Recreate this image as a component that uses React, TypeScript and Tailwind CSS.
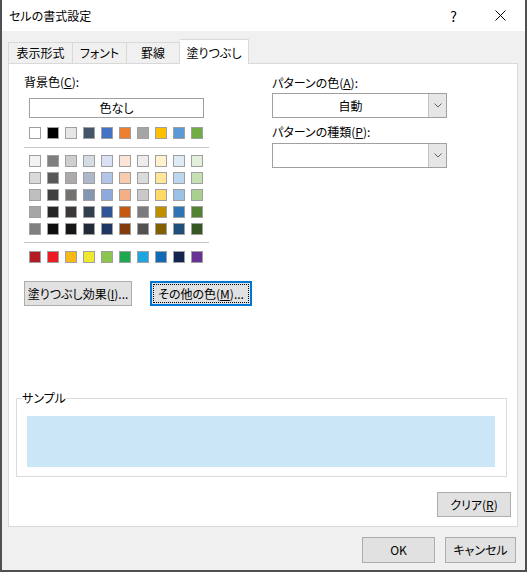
import React from "react";

const themeRow = [
  "#ffffff", "#000000", "#e7e6e6", "#44546a", "#4472c4",
  "#ed7d31", "#a5a5a5", "#ffc000", "#5b9bd5", "#70ad47",
];

const shadeRows = [
  ["#f2f2f2", "#7f7f7f", "#d0cece", "#d6dce4", "#d9e1f2", "#fce4d6", "#ededed", "#fff2cc", "#ddebf7", "#e2efda"],
  ["#d9d9d9", "#595959", "#aeaaaa", "#adb9ca", "#b4c6e7", "#f8cbad", "#dbdbdb", "#ffe699", "#bdd7ee", "#c6e0b4"],
  ["#bfbfbf", "#404040", "#767171", "#8496b0", "#8ea9db", "#f4b084", "#c9c9c9", "#ffd966", "#9bc2e6", "#a9d08e"],
  ["#a6a6a6", "#262626", "#3a3838", "#333f4f", "#305496", "#c65911", "#7b7b7b", "#bf8f00", "#2f75b5", "#548235"],
  ["#808080", "#0d0d0d", "#171616", "#222a35", "#203764", "#833c0c", "#525252", "#806000", "#1f4e78", "#375623"],
];

const standardRow = [
  "#b31b24", "#ed1c24", "#f8b818", "#f0e82e", "#8cc54e",
  "#1ea84f", "#1ea6e1", "#1269b5", "#14254f", "#663293",
];

function Swatches({ colors }: { colors: string[] }) {
  return (
    <div className="flex gap-[6px] pl-[5px]">
      {colors.map((c, i) => (
        <div
          key={i}
          className="h-[12px] w-[12px] border border-[#a0a0a0]"
          style={{ backgroundColor: c }}
        />
      ))}
    </div>
  );
}

function Combo({ value }: { value?: string }) {
  return (
    <div className="flex h-[25px] w-[175px] border border-[#a0a0a0] bg-white">
      <div className="flex flex-1 items-center justify-center text-[12px] leading-[14px]">
        {value}
      </div>
      <div className="flex w-[18px] items-center justify-center border-l border-[#c4c4c4] bg-[#e6e6e6]">
        <svg width="8" height="5" viewBox="0 0 8 5" fill="none">
          <path d="M0.5 0.5 L4 4 L7.5 0.5" stroke="#606060" strokeWidth="1" />
        </svg>
      </div>
    </div>
  );
}

export default function App() {
  return (
    <div className="flex h-[572px] w-[527px] flex-col border-x-2 border-b-2 border-[#505050] bg-[#f0f0f0] font-['Noto_Sans_CJK_JP',sans-serif] text-[12px] text-black [font-feature-settings:'palt']">
      {/* title bar */}
      <div className="flex h-[31px] items-center bg-white pl-[7px]">
        <span className="leading-[14px]">セルの書式設定</span>
        <span className="ml-auto mr-[13px] text-[14px] leading-[16px]">?</span>
        <div className="mr-[19px] ml-[24px] flex h-[31px] w-[12px] items-center justify-center">
          <svg width="11" height="11" viewBox="0 0 11 11" fill="none">
            <path d="M0.5 0.5 L10.5 10.5 M10.5 0.5 L0.5 10.5" stroke="#000" strokeWidth="1" />
          </svg>
        </div>
      </div>

      {/* tabs */}
      <div className="relative z-10 mt-[8px] flex h-[24px] items-start pl-[6px]">
        <div className="mt-[3px] flex h-[21px] w-[65px] items-center justify-center border border-b-0 border-[#d9d9d9] leading-[14px]">
          表示形式
        </div>
        <div className="mt-[3px] flex h-[21px] w-[54px] items-center justify-center border border-b-0 border-l-0 border-[#d9d9d9] leading-[14px]">
          フォント
        </div>
        <div className="mt-[3px] flex h-[21px] w-[53px] items-center justify-center border border-b-0 border-l-0 border-[#d9d9d9] leading-[14px]">
          罫線
        </div>
        <div className="flex h-[25px] w-[69px] items-center justify-center border border-b-0 border-l-0 border-[#d9d9d9] bg-white pt-[2px] leading-[14px]">
          塗りつぶし
        </div>
      </div>

      {/* panel */}
      <div className="ml-[6px] flex h-[464px] w-[510px] flex-col border border-[#d9d9d9] bg-white">
        <div className="flex pl-[15px] pt-[11px]">
          {/* left column */}
          <div className="flex w-[248px] flex-col">
            <div className="h-[14px] leading-[14px]">
              背景色(<span className="underline">C</span>):
            </div>
            <div className="ml-[5px] mt-[9px] flex h-[20px] w-[175px] items-center justify-center border border-[#a0a0a0] leading-[14px]">
              色なし
            </div>
            <div className="mt-[9px]">
              <Swatches colors={themeRow} />
            </div>
            <div className="mt-[8px] h-px w-[185px] bg-[#c8c8c8]" />
            <div className="mt-[7px] flex flex-col gap-[5px]">
              {shadeRows.map((row, i) => (
                <Swatches key={i} colors={row} />
              ))}
            </div>
            <div className="mt-[7px] h-px w-[185px] bg-[#c8c8c8]" />
            <div className="mt-[8px]">
              <Swatches colors={standardRow} />
            </div>
            <div className="mt-[18px] flex gap-[18px]">
              <div className="flex h-[25px] w-[108px] items-center justify-center border border-[#adadad] bg-[#e1e1e1] leading-[14px]">
                塗りつぶし効果(<span className="underline">I</span>)...
              </div>
              <div className="flex h-[25px] w-[102px] items-center justify-center border-2 border-[#0078d7] bg-[#e1e1e1] leading-[14px] outline-1 outline-offset-[-4px] outline-black outline-dotted">
                その他の色(<span className="underline">M</span>)...
              </div>
            </div>
          </div>

          {/* right column */}
          <div className="flex flex-col">
            <div className="mt-[1px] h-[14px] leading-[14px]">
              パターンの色(<span className="underline">A</span>):
            </div>
            <div className="mt-[3px]">
              <Combo value="自動" />
            </div>
            <div className="mt-[7px] h-[14px] leading-[14px]">
              パターンの種類(<span className="underline">P</span>):
            </div>
            <div className="mt-[4px]">
              <Combo />
            </div>
          </div>
        </div>

        {/* sample */}
        <div className="relative ml-[7px] mt-[92px] h-[79px] w-[491px] border border-[#dcdcdc] pl-[10px] pt-[17px]">
          <span className="absolute left-[5px] top-[-8px] bg-white leading-[14px]">サンプル</span>
          <div className="h-[51px] w-[468px] bg-[#cbe6f7]" />
        </div>

        <div className="mr-[6px] mt-[15px] flex justify-end">
          <div className="flex h-[25px] w-[74px] items-center justify-center border border-[#adadad] bg-[#e1e1e1] leading-[14px]">
            クリア(<span className="underline">R</span>)
          </div>
        </div>
      </div>

      {/* dialog buttons */}
      <div className="mr-[9px] mt-[10px] flex justify-end gap-[10px]">
        <div className="flex h-[26px] w-[73px] items-center justify-center border border-[#adadad] bg-[#e1e1e1] leading-[14px]">
          OK
        </div>
        <div className="flex h-[26px] w-[71px] items-center justify-center border border-[#adadad] bg-[#e1e1e1] leading-[14px]">
          キャンセル
        </div>
      </div>
    </div>
  );
}
